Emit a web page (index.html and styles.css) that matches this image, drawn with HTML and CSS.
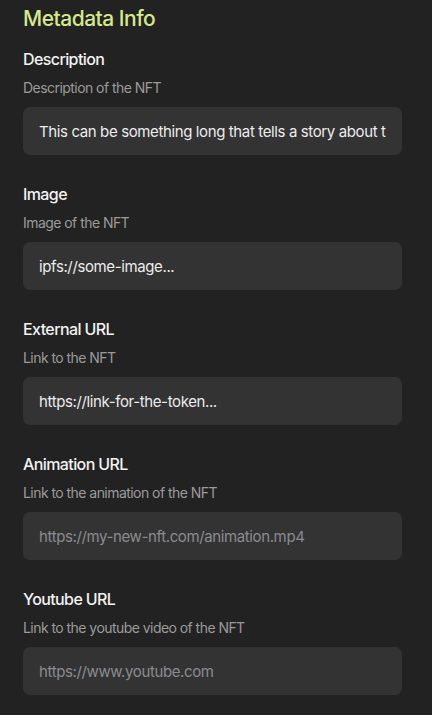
FILE: index.html
```html
<!DOCTYPE html>
<html lang="en">
<head>
<meta charset="utf-8">
<title>Metadata Info</title>
<link rel="stylesheet" href="styles.css">
</head>
<body>
<main class="panel">
  <h2 class="title">Metadata Info</h2>
  <div class="field">
    <label class="label" for="desc">Description</label>
    <p class="hint">Description of the NFT</p>
    <input class="input" id="desc" type="text" readonly value="This can be something long that tells a story about the NFT">
  </div>
  <div class="field">
    <label class="label" for="image">Image</label>
    <p class="hint">Image of the NFT</p>
    <input class="input" id="image" type="text" readonly value="ipfs://some-image...">
  </div>
  <div class="field">
    <label class="label" for="ext">External URL</label>
    <p class="hint">Link to the NFT</p>
    <input class="input" id="ext" type="text" readonly value="https://link-for-the-token...">
  </div>
  <div class="field">
    <label class="label" for="anim">Animation URL</label>
    <p class="hint">Link to the animation of the NFT</p>
    <input class="input" id="anim" type="text" placeholder="https://my-new-nft.com/animation.mp4">
  </div>
  <div class="field">
    <label class="label" for="yt">Youtube URL</label>
    <p class="hint">Link to the youtube video of the NFT</p>
    <input class="input" id="yt" type="text" placeholder="https://www.youtube.com">
  </div>
</main>
</body>
</html>
```

FILE: styles.css
```css
* { box-sizing: border-box; }

html, body {
  margin: 0;
  background: #222222;
}

body {
  font-family: Inter, "Noto Sans", sans-serif;
  color: #f2f2f2;
}

.panel {
  display: flex;
  flex-direction: column;
  padding: 5px 30px 0 23px;
}

.title {
  margin: 0 0 16px;
  font-size: 21px;
  line-height: 28px;
  font-weight: 500;
  color: #d6e98f;
  letter-spacing: -0.5px;
}

.field {
  display: flex;
  flex-direction: column;
  gap: 9px;
  margin-bottom: 29px;
}

.label {
  font-size: 16px;
  line-height: 20px;
  font-weight: 500;
  color: #f2f2f2;
  letter-spacing: -0.6px;
}

.hint {
  margin: 0;
  font-size: 14px;
  line-height: 20px;
  color: #9b9b9b;
  letter-spacing: -0.55px;
}

.input {
  height: 48px;
  width: 100%;
  border: none;
  outline: none;
  border-radius: 7px;
  background: #333333;
  padding: 0 16px;
  font-family: Inter, "Noto Sans", sans-serif;
  font-size: 15px;
  color: #ececec;
  letter-spacing: -0.38px;
}

.input::placeholder {
  color: #8b8b90;
}
```
